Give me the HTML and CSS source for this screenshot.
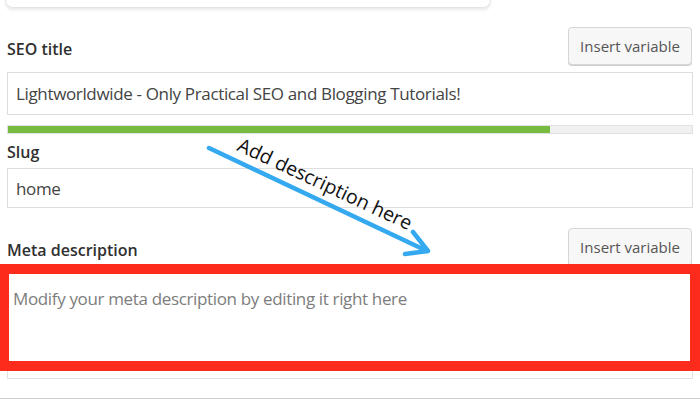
FILE: index.html
```html
<!DOCTYPE html>
<html lang="en">
<head>
    <meta charset="UTF-8">
    <meta name="viewport" content="width=device-width, initial-scale=1.0">
    <title>Snippet editor</title>
    <link rel="stylesheet" href="styles.css">
</head>
<body>

<div class="panel">
    <div class="card-edge"></div>

    <div class="field-head first">
        <label class="field-label" for="seoTitle">SEO title</label>
        <button class="insert-btn">Insert variable</button>
    </div>
    <input class="text-input" type="text" id="seoTitle" value="Lightworldwide - Only Practical SEO and Blogging Tutorials!">
    <div class="progress"><div class="progress-fill" style="width:79.3%"></div></div>

    <div class="field-head slug">
        <label class="field-label" for="slug">Slug</label>
    </div>
    <input class="text-input short" type="text" id="slug" value="home">

    <div class="field-head meta">
        <label class="field-label" for="metaDesc">Meta description</label>
        <button class="insert-btn">Insert variable</button>
    </div>
    <div class="desc-wrap">
        <textarea class="desc-input" id="metaDesc" placeholder="Modify your meta description by editing it right here"></textarea>
        <div class="highlight"></div>
    </div>

    <div class="panel-end"></div>
</div>

<!-- annotation drawn over the screenshot -->
<svg class="note" width="700" height="400" viewBox="0 0 700 400">
    <line x1="209" y1="148" x2="427" y2="251" />
    <polyline points="413,232 428,251 405,254" />
    <text transform="translate(236,150) rotate(25)">Add description here</text>
</svg>

</body>
</html>
```

FILE: styles.css
```css
body {
    margin: 0;
    background: #fff;
    font-family: "Open Sans", "Noto Sans", Arial, sans-serif;
    width: 700px;
    height: 400px;
    overflow: hidden;
    position: relative;
}
.panel {
    padding: 0 7px;
}
.card-edge {
    margin-left: -2px;
    width: 484px;
    height: 7px;
    border: 1px solid #e4e4e4;
    border-top: none;
    border-radius: 0 0 8px 8px;
    box-shadow: 0 2px 3px rgba(0, 0, 0, 0.09);
}
.field-head {
    display: flex;
    justify-content: space-between;
    align-items: flex-end;
}
.field-head.first {
    margin-top: 19px;
}
.field-head.slug {
    margin-top: 6px;
}
.field-head.slug .field-label {
    margin-bottom: 0;
}
.field-head.meta {
    margin-top: 20px;
}
.field-label {
    font-size: 16px;
    font-weight: 600;
    line-height: 24px;
    color: #303030;
    margin-bottom: 4px;
}
.insert-btn {
    height: 38px;
    width: 124px;
    margin-right: 1px;
    padding: 0;
    font-family: inherit;
    font-size: 15px;
    color: #555;
    background: #f7f7f7;
    border: 1px solid #d6d6d6;
    border-radius: 4px;
    box-shadow: 0 1px 0 #d0d0d0;
}
.text-input {
    display: block;
    box-sizing: border-box;
    width: 100%;
    height: 43px;
    margin: 7px 0 0;
    padding: 0 8px;
    font-family: inherit;
    font-size: 17px;
    letter-spacing: -0.35px;
    color: #444;
    border: 1px solid #dedede;
    border-radius: 0;
    outline: none;
}
.text-input.short {
    height: 40px;
    margin-top: 4px;
}
.progress {
    margin-top: 10px;
    height: 9px;
    box-sizing: border-box;
    background: #f1f1f1;
    border: 1px solid #e0e0e0;
}
.progress-fill {
    height: 100%;
    background: #77bb41;
}
.desc-wrap {
    position: relative;
    margin-top: 6px;
}
.desc-input {
    display: block;
    box-sizing: border-box;
    width: 100%;
    height: 107px;
    margin: 0;
    padding: 14px 5px;
    resize: none;
    font-family: inherit;
    font-size: 17px;
    letter-spacing: -0.35px;
    color: #444;
    border: 1px solid #e2e2e2;
    outline: none;
}
.desc-input::placeholder {
    color: #7d7d7d;
}
.highlight {
    position: absolute;
    top: -8px;
    left: -7px;
    right: -7px;
    bottom: 8px;
    border: 10px solid #fd2b1c;
    border-left-width: 9px;
}
.panel-end {
    margin: 19px -7px 0;
    border-top: 1px solid #cfcfcf;
}
.note {
    position: absolute;
    left: 0;
    top: 0;
    pointer-events: none;
}
.note line,
.note polyline {
    fill: none;
    stroke: #35a9f0;
    stroke-width: 4.5;
    stroke-linecap: round;
    stroke-linejoin: round;
}
.note text {
    font-family: "Open Sans", sans-serif;
    font-size: 19.5px;
    fill: #111;
}
```
